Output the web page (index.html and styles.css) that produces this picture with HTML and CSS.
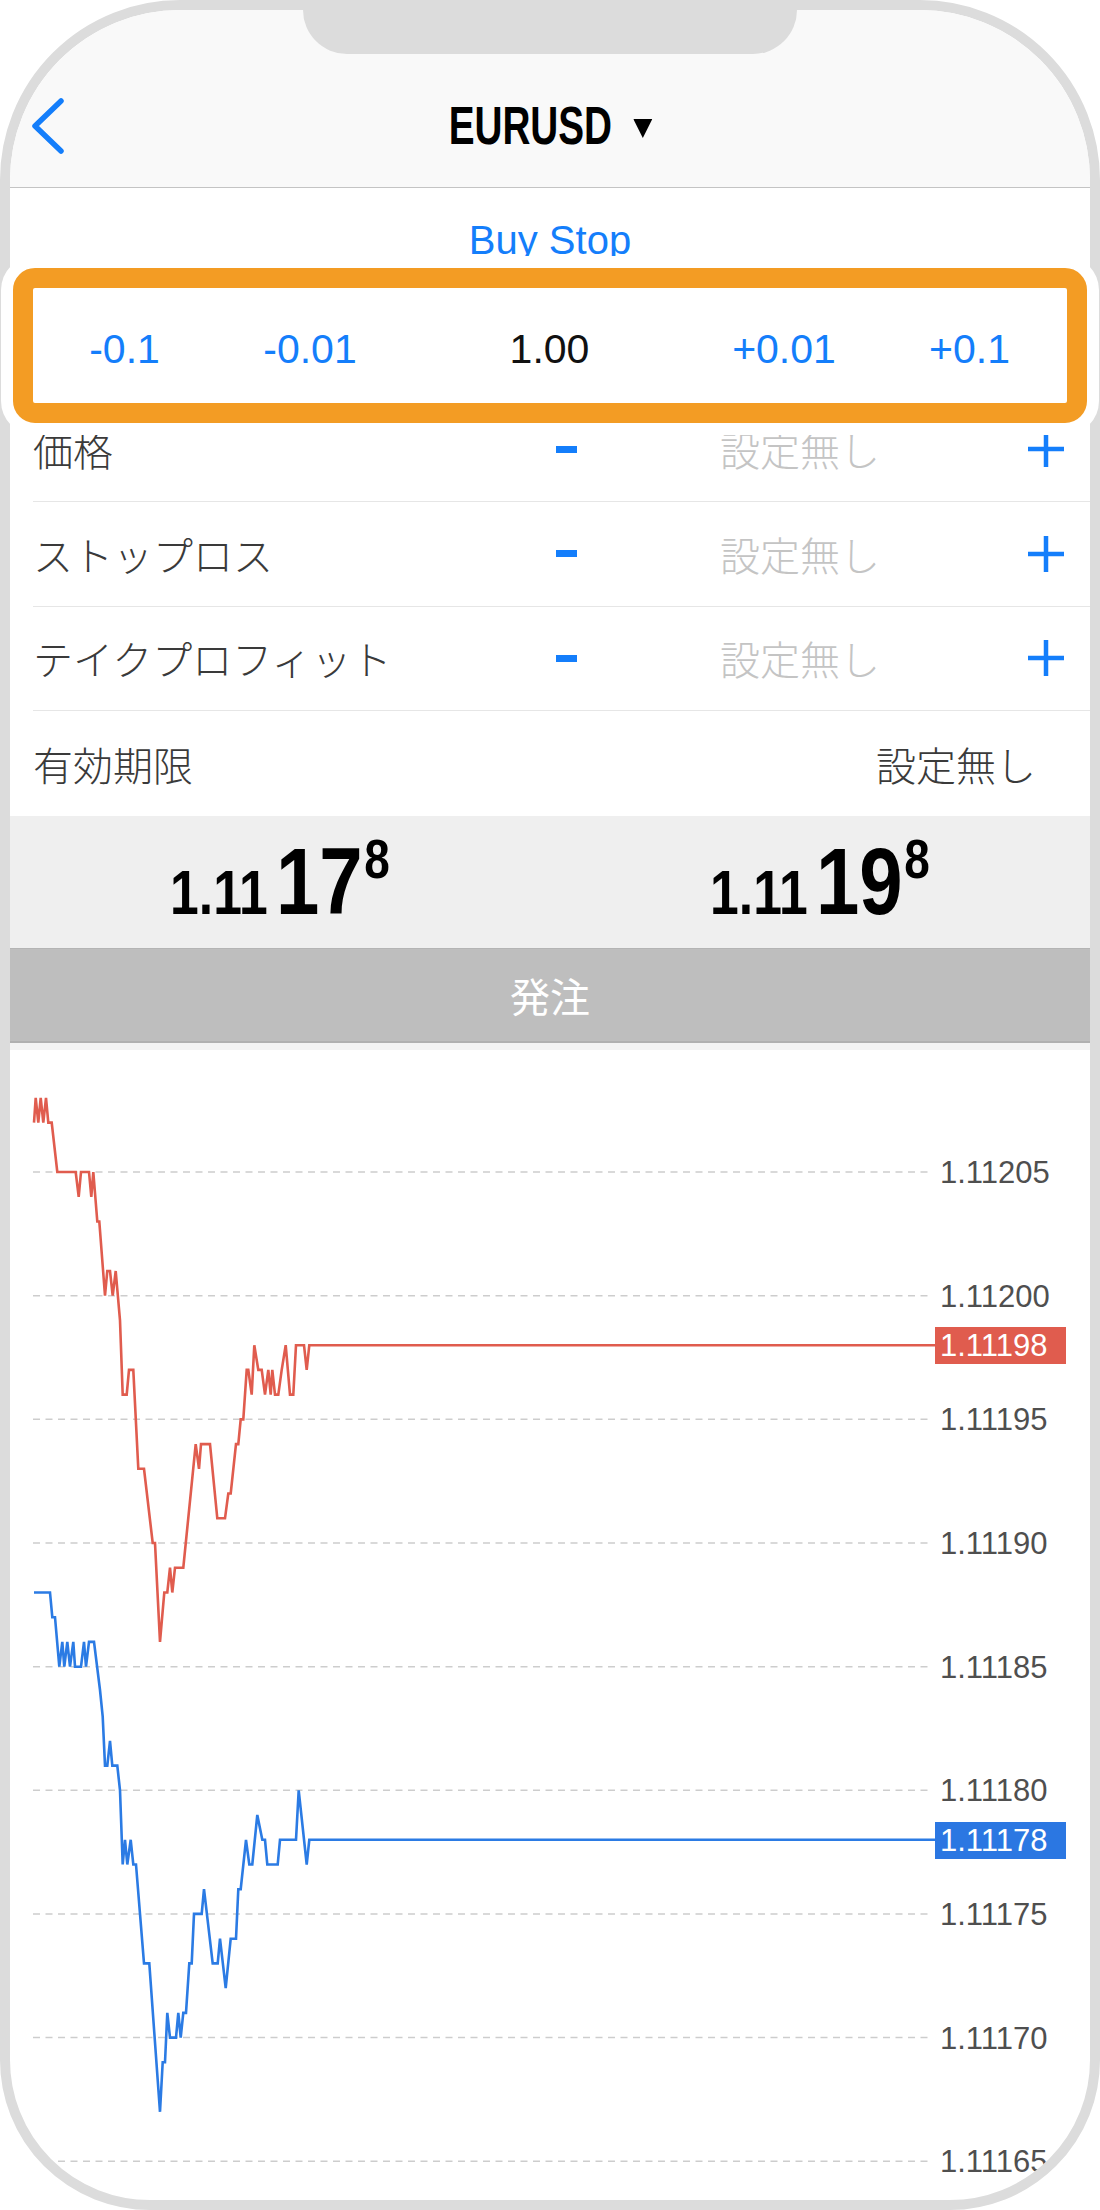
FILE: index.html
```html
<!DOCTYPE html>
<html lang="ja">
<head>
    <meta charset="UTF-8">
    <meta name="viewport" content="width=device-width, initial-scale=1.0">
    <title>EURUSD 注文</title>
    <link rel="stylesheet" href="styles.css">
</head>
<body>
    <div class="phone">
        <div class="notch"></div>

        <header class="nav">
            <div class="nav-bar">
                <a class="back" href="#">
                    <svg width="36" height="60" viewBox="0 0 36 60"><path d="M32 5 L6 30 L32 55" fill="none" stroke="#147efb" stroke-width="5.5" stroke-linecap="round" stroke-linejoin="round"/></svg>
                </a>
                <div class="title">
                    <span>EURUSD</span>
                    <svg class="caret" width="26" height="19" viewBox="0 0 26 19"><polygon points="0,0 26,0 13,19" fill="#000"/></svg>
                </div>
                <div></div>
            </div>
        </header>

        <section class="order">
            <div class="row row-type">Buy Stop</div>
            <div class="row row-lot">
                <span>-0.1</span>
                <span>-0.01</span>
                <span class="lot-value">1.00</span>
                <span>+0.01</span>
                <span>+0.1</span>
            </div>
            <div class="row row-field">
                <span class="label">価格</span>
                <span class="minus"></span>
                <span class="placeholder">設定無し</span>
                <svg class="plus" width="36" height="36" viewBox="0 0 36 36"><path d="M18 0 V36 M0 18 H36" stroke="#147efb" stroke-width="4.5"/></svg>
            </div>
            <div class="row row-field">
                <span class="label">ストップロス</span>
                <span class="minus"></span>
                <span class="placeholder">設定無し</span>
                <svg class="plus" width="36" height="36" viewBox="0 0 36 36"><path d="M18 0 V36 M0 18 H36" stroke="#147efb" stroke-width="4.5"/></svg>
            </div>
            <div class="row row-field">
                <span class="label">テイクプロフィット</span>
                <span class="minus"></span>
                <span class="placeholder">設定無し</span>
                <svg class="plus" width="36" height="36" viewBox="0 0 36 36"><path d="M18 0 V36 M0 18 H36" stroke="#147efb" stroke-width="4.5"/></svg>
            </div>
            <div class="row row-expiry">
                <span class="label">有効期限</span>
                <span class="label">設定無し</span>
            </div>
        </section>

        <div class="quotes">
            <div class="quote-cell">
                <div class="quote"><span class="q-small">1.11</span><span class="q-big">17</span><span class="q-sup">8</span></div>
            </div>
            <div class="quote-cell">
                <div class="quote"><span class="q-small">1.11</span><span class="q-big">19</span><span class="q-sup">8</span></div>
            </div>
        </div>

        <button class="submit">発注</button>

        <div class="chart">
            <!-- viewBox uses page coordinates -->
            <svg width="1080" height="1150" viewBox="10 1050 1080 1150">
                <g stroke="#cdcdcd" stroke-width="1.5" stroke-dasharray="7 5.5">
                    <line x1="33" y1="1172.05" x2="932" y2="1172.05"/>
                    <line x1="33" y1="1295.7" x2="932" y2="1295.7"/>
                    <line x1="33" y1="1419.35" x2="932" y2="1419.35"/>
                    <line x1="33" y1="1543" x2="932" y2="1543"/>
                    <line x1="33" y1="1666.65" x2="932" y2="1666.65"/>
                    <line x1="33" y1="1790.3" x2="932" y2="1790.3"/>
                    <line x1="33" y1="1913.95" x2="932" y2="1913.95"/>
                    <line x1="33" y1="2037.6" x2="932" y2="2037.6"/>
                    <line x1="33" y1="2161.25" x2="932" y2="2161.25"/>
                </g>
                <g class="axis">
                    <text x="940" y="1183">1.11205</text>
                    <text x="940" y="1306.7">1.11200</text>
                    <text x="940" y="1430.3">1.11195</text>
                    <text x="940" y="1554">1.11190</text>
                    <text x="940" y="1677.6">1.11185</text>
                    <text x="940" y="1801.3">1.11180</text>
                    <text x="940" y="1925">1.11175</text>
                    <text x="940" y="2048.6">1.11170</text>
                    <text x="940" y="2172.2">1.11165</text>
                </g>

                <polyline class="line-ask" points="34,1122.6 35.7,1097.9 38.3,1122.6 40.7,1097.9 43.3,1122.6 46,1097.9 48.3,1122.6 51.7,1122.6 57.3,1172 75.7,1172 78.7,1196.8 81,1172 89,1172 91.3,1196.8 93.3,1172 97.3,1221.5 99.3,1221.5 105,1295.7 107.3,1271 110,1271 112.7,1295.7 115.7,1271 120,1320.4 122.7,1394.6 126.7,1394.6 129,1369.9 133.3,1369.9 138.3,1468.8 144,1468.8 152.7,1543 155,1543 160,1641.9 164.3,1592.5 167.3,1592.5 170,1567.7 172.3,1592.5 175,1567.7 183.3,1567.7 195.7,1444.1 199,1468.8 201,1444.1 210,1444.1 217.3,1518.3 225,1518.3 228.3,1493.5 230.7,1493.5 236,1444.1 238.3,1444.1 240.7,1419.4 243.3,1419.4 246.7,1369.9 248.3,1369.9 251.7,1394.6 254.3,1345.2 258.3,1369.9 261.7,1369.9 265,1394.6 268.3,1369.9 270.7,1394.6 272.3,1369.9 275,1394.6 278.3,1394.6 281.7,1369.9 285.7,1345.2 290,1394.6 293.3,1394.6 296,1345.2 304,1345.2 306.7,1369.9 309.3,1345.2 935,1345.2"/>
                <polyline class="line-bid" points="34,1592.5 50,1592.5 52.3,1617.2 55,1617.2 59.3,1666.7 62.3,1641.9 64.3,1666.7 67.3,1641.9 70,1666.7 73.3,1641.9 75,1666.7 81,1666.7 84,1641.9 86,1666.7 89,1641.9 94,1641.9 100,1690 102.7,1716.7 105,1765.6 107.3,1765.6 110,1740.8 112.3,1765.6 117.3,1765.6 120,1790.3 122.7,1864.5 125,1839.8 127.3,1864.5 130.7,1839.8 133.3,1864.5 136,1864.5 140,1913.9 144,1963.4 149.3,1963.4 160,2111.8 162.7,2062.3 165,2062.3 167.3,2012.9 170,2037.6 176,2037.6 178.3,2012.9 180.7,2037.6 183.3,2012.9 186,2012.9 189.3,1963.4 191.7,1963.4 194,1913.9 201.7,1913.9 204,1889.2 212.7,1963.4 217.7,1963.4 220,1938.7 225.7,1988.1 230.7,1938.7 236,1938.7 238.3,1889.2 240.7,1889.2 246,1839.8 249.3,1864.5 252.3,1864.5 257.3,1815 262.3,1839.8 265,1839.8 267.3,1864.5 277.7,1864.5 280,1839.8 296,1839.8 298.7,1790.3 306.7,1864.5 309.3,1839.8 935,1839.8"/>

                <rect x="935" y="1327" width="131" height="37" fill="#e05c4e"/>
                <text class="tag" x="940" y="1356.2">1.11198</text>
                <rect x="935" y="1822" width="131" height="37" fill="#2b77e2"/>
                <text class="tag" x="940" y="1850.8">1.11178</text>
            </svg>
        </div>
    </div>

    <div class="highlight"></div>
</body>
</html>
```

FILE: styles.css
```css
* {
    margin: 0;
    padding: 0;
    box-sizing: border-box;
}
body {
    width: 1100px;
    height: 2210px;
    background: #fff;
    font-family: "Liberation Sans", "Noto Sans CJK JP", sans-serif;
    overflow: hidden;
}
.phone {
    position: relative;
    width: 1100px;
    height: 2210px;
    border: 10px solid #dcdcdc;
    border-radius: 180px 180px 150px 150px;
    overflow: hidden;
    background: #fff;
}
.notch {
    position: absolute;
    top: 0;
    left: 293px;
    width: 494px;
    height: 44px;
    background: #dcdcdc;
    border-radius: 0 0 44px 44px;
    z-index: 2;
}

/* nav */
.nav {
    height: 178px;
    padding-top: 54px;
    background: #f9f9f9;
    border-bottom: 1px solid #c4c4c4;
}
.nav-bar {
    height: 123px;
    display: grid;
    grid-template-columns: 100px 1fr 100px;
    align-items: center;
}
.back {
    display: block;
    padding-left: 19px;
    height: 60px;
}
.back svg {
    display: block;
}
.title {
    justify-self: center;
    display: flex;
    align-items: center;
    gap: 29px;
    font-size: 53px;
    font-weight: 700;
    line-height: 1;
    color: #000;
    transform: scaleX(0.73);
}
.caret {
    margin-top: 6px;
}

/* order form */
.row {
    height: 104.67px;
    display: flex;
    align-items: center;
}
.row-type {
    justify-content: center;
    font-size: 40px;
    color: #147efb;
}
.row-lot {
    display: grid;
    grid-template-columns: 229px 142px 337px 132px 239px;
    padding-top: 10px;
    text-align: center;
    font-size: 41px;
    color: #147efb;
}
.lot-value {
    color: #111;
}
.row-field {
    display: grid;
    grid-template-columns: 1fr 90px 390px 89px;
    margin-left: 23px;
    border-bottom: 1px solid #e6e6e6;
}
.label {
    font-family: "Noto Sans CJK JP", sans-serif;
    font-size: 40px;
    font-weight: 300;
    color: #3a3a3a;
}
.minus {
    justify-self: center;
    width: 21px;
    height: 7px;
    background: #147efb;
}
.placeholder {
    padding-left: 109px;
    font-family: "Noto Sans CJK JP", sans-serif;
    font-size: 40px;
    font-weight: 300;
    color: #c4c4c4;
}
.plus {
    justify-self: center;
}
.row-expiry {
    justify-content: space-between;
    margin-left: 23px;
    padding-right: 54px;
}

/* quotes */
.quotes {
    height: 132px;
    display: flex;
    background: #efefef;
}
.quote-cell {
    flex: 1;
    display: flex;
    align-items: center;
    justify-content: center;
}
.quote {
    display: flex;
    align-items: baseline;
    font-weight: 700;
    line-height: 1;
    color: #000;
    transform: scaleX(0.82);
}
.q-small {
    font-size: 63px;
}
.q-big {
    font-size: 95px;
    margin-left: 10px;
}
.q-sup {
    align-self: flex-start;
    font-size: 56px;
    margin-top: -3px;
    margin-left: 2px;
}

.submit {
    display: block;
    width: 100%;
    height: 95px;
    border: none;
    border-top: 1px solid #b4b4b4;
    border-bottom: 2px solid #b0b0b0;
    background: #bebebe;
    color: #fff;
    font-family: "Noto Sans CJK JP", sans-serif;
    font-size: 40px;
}

/* chart */
.chart {
    border-top: 7px solid #f3f3f3;
}
.chart svg {
    display: block;
}
.axis text {
    font-family: "Liberation Sans", sans-serif;
    font-size: 31px;
    fill: #4f4f4f;
}
.tag {
    font-family: "Liberation Sans", sans-serif;
    font-size: 31px;
    fill: #fff;
}
.line-ask,
.line-bid {
    fill: none;
    stroke-width: 2.6;
}
.line-ask {
    stroke: #e05c4e;
}
.line-bid {
    stroke: #2b7be4;
}

/* annotation frame */
.highlight {
    position: absolute;
    left: 13px;
    top: 268px;
    width: 1074px;
    height: 155px;
    border: 20px solid #f39c24;
    border-radius: 22px;
    box-shadow: 0 0 0 12px #fff;
    z-index: 5;
}
```
